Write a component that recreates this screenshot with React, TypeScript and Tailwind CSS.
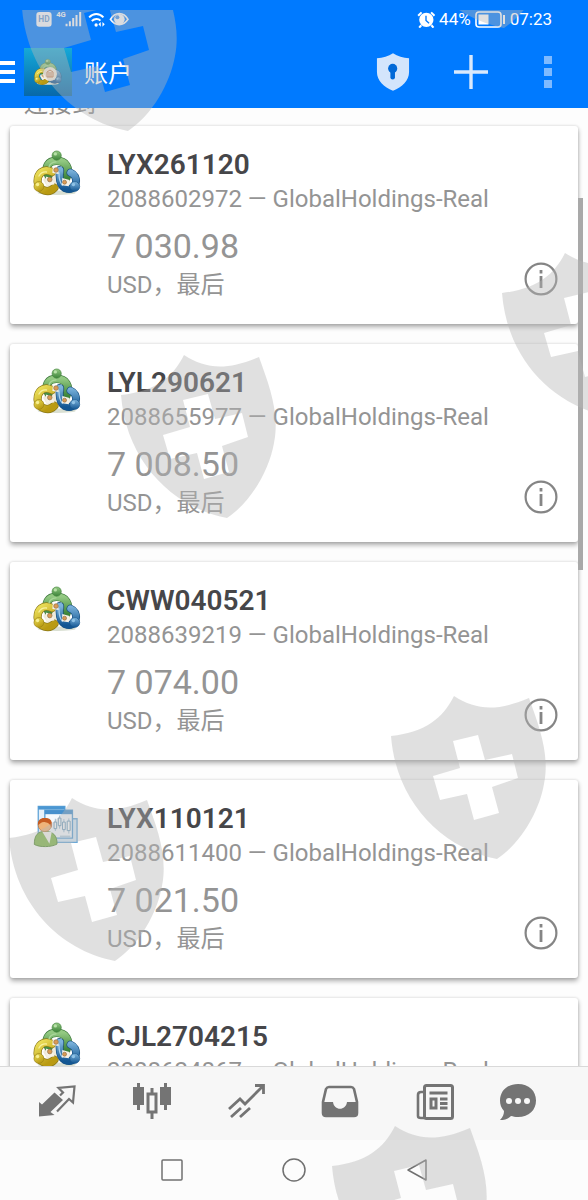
import React from "react";

type Account = {
  name: string;
  login: string;
  balance: string;
  kind: "platform" | "manager";
};

const accounts: Account[] = [
  { name: "LYX261120", login: "2088602972", balance: "7 030.98", kind: "platform" },
  { name: "LYL290621", login: "2088655977", balance: "7 008.50", kind: "platform" },
  { name: "CWW040521", login: "2088639219", balance: "7 074.00", kind: "platform" },
  { name: "LYX110121", login: "2088611400", balance: "7 021.50", kind: "manager" },
  { name: "CJL2704215", login: "2088624867", balance: "7 015.20", kind: "platform" },
];

function PlatformLogo({ className, id }: { className: string; id: string }) {
  return (
    <svg viewBox="25 26 146 142" className={className} aria-hidden="true">
      <defs>
        <linearGradient id={id + "g"} x1="0" y1="0" x2="0" y2="1">
          <stop offset="0" stopColor="#93c982" />
          <stop offset="1" stopColor="#3c8439" />
        </linearGradient>
        <linearGradient id={id + "y"} x1="0" y1="0" x2="0.6" y2="1">
          <stop offset="0" stopColor="#ece05a" />
          <stop offset="1" stopColor="#b99a12" />
        </linearGradient>
        <linearGradient id={id + "b"} x1="0" y1="0" x2="0" y2="1">
          <stop offset="0" stopColor="#7db4dc" />
          <stop offset="1" stopColor="#125693" />
        </linearGradient>
      </defs>
      <ellipse cx="97" cy="157" rx="58" ry="7" fill="#d9dfd2" />
      <path d="M75 84H118L140 128L112 142H70L56 118Z" fill="#efeadb" />
      <g fill="none" strokeLinecap="round">
        <path d="M72 104C59 80 71 60 97 60S140 80 126 112" stroke="#3a7539" strokeWidth="26" />
        <path d="M72 104C59 80 71 60 97 60S140 80 126 112" stroke={`url(#${id}g)`} strokeWidth="22" />
        <path d="M83 94C55 80 38 100 39 124C42 152 74 160 90 142" stroke="#8b7817" strokeWidth="25" />
        <path d="M83 94C55 80 38 100 39 124C42 152 74 160 90 142" stroke={`url(#${id}y)`} strokeWidth="21" />
        <path d="M107 88C104 112 107 134 122 143C148 154 162 128 153 108C149 100 144 98 139 96" stroke="#164e80" strokeWidth="24" />
        <path d="M107 88C104 112 107 134 122 143C148 154 162 128 153 108C149 100 144 98 139 96" stroke={`url(#${id}b)`} strokeWidth="20" />
        <path d="M74 78C76 68 85 64 95 63" stroke="#a9d69a" strokeWidth="4" />
        <path d="M43 106C48 97 57 93 66 94" stroke="#f8f1a0" strokeWidth="4" />
        <path d="M104 96C104 112 107 126 114 134" stroke="#a8d1ee" strokeWidth="4" />
      </g>
      <path d="M64 108L84 114L90 132L66 134ZM114 112L136 118L134 137L113 134ZM85 80L101 81L103 100L84 97Z" fill="#f6f1e6" />
      <g fill="#db9a55" stroke="#8b7044" strokeWidth="2">
        <circle cx="95" cy="88" r="7" />
        <circle cx="76" cy="117" r="7" />
        <circle cx="121" cy="125" r="6" />
      </g>
      <g strokeWidth="2">
        <circle cx="97" cy="44" r="14" fill={`url(#${id}g)`} stroke="#44853f" />
        <circle cx="43" cy="138" r="15" fill={`url(#${id}y)`} stroke="#998015" />
        <circle cx="152" cy="138" r="15" fill={`url(#${id}b)`} stroke="#19558a" />
      </g>
      <circle cx="93" cy="39" r="5" fill="#b8e0a8" />
      <circle cx="39" cy="132" r="5" fill="#f7ef92" />
      <circle cx="148" cy="132" r="5" fill="#8fc2e6" />
    </svg>
  );
}

function ManagerLogo({ className }: { className: string }) {
  return (
    <svg viewBox="102 52 146 142" className={className} aria-hidden="true">
      <path d="M118 60H199V160H118Z" fill="#e6f1fa" stroke="#64a6d8" strokeWidth="4" />
      <path d="M118 60H199V70H118Z" fill="#4b97d2" />
      <path d="M150 98H236V170H150Z" fill="#d6e9f7" stroke="#69a9d9" strokeWidth="4" />
      <path d="M138 72H222V157H138Z" fill="#f4f9fd" stroke="#5b9fd4" strokeWidth="4" />
      <path d="M138 72H222V84H138Z" fill="#4690cd" />
      <path d="M170 98V135M183 88V128M196 99V139M211 97V143M184 151H216" stroke="#719dbd" strokeWidth="2" />
      <path d="M166 108H174V128H166ZM179 96H187V119H179ZM192 108H200V131H192ZM206 105H215V134H206Z" fill="#fff" stroke="#719dbd" strokeWidth="3" />
      <path d="M106 176C106 148 116 137 139 136C163 137 176 149 175 175C157 185 122 185 106 176Z" fill="#83b94d" stroke="#588c35" strokeWidth="3" />
      <path d="M130 137L159 138L152 174Z" fill="#f4f5ee" />
      <ellipse cx="138" cy="117" rx="20" ry="20" fill="#eeb37a" stroke="#bb6f35" strokeWidth="2" />
      <path d="M117 117C115 100 128 94 141 96C158 97 162 108 158 126C154 112 144 109 137 108C127 107 123 114 117 117Z" fill="#c65c22" />
    </svg>
  );
}

function InfoIcon() {
  return (
    <svg viewBox="0 0 34 34" className="size-[34px]" fill="none" aria-hidden="true">
      <circle cx="17" cy="17" r="15.4" stroke="#858585" strokeWidth="2.2" />
      <path d="M17 8V11.5M17 14V26" stroke="#858585" strokeWidth="2.8" />
    </svg>
  );
}

function StatusBar() {
  return (
    <div className="flex h-9 items-center justify-between px-9 pt-[2px] text-white">
      <div className="flex items-center">
        <svg viewBox="105 28 280 54" className="h-[18px] w-[93px]" role="img" aria-label="HD 4G">
          <rect x="106" y="34" width="46" height="44" rx="9" fill="#f4f7fc" />
          <text x="129" y="65" textAnchor="middle" fontSize="25" fontWeight="700" fontFamily="Roboto" fill="#6599d5">HD</text>
          <text x="166" y="50" fontSize="23" fontWeight="700" fontFamily="Roboto" fill="#f4f7fc">4G</text>
          <path d="M197 77V69M207 77V62M217 77V52M227 77V43M238 77V34" stroke="#f4f7fc" strokeWidth="6" />
          <g fill="none" stroke="#fff" strokeWidth="6">
            <path d="M265 50C278 37 295 37 308 50M273 61C282 53 293 53 299 60" />
          </g>
          <circle cx="286" cy="73" r="5" fill="#fff" />
          <path d="M293 71L300 64V78ZM312 71L305 64V78Z" fill="#fff" />
          <path d="M329 56C343 33 369 33 382 56C368 77 343 77 329 56Z" fill="none" stroke="#f4f7fc" strokeWidth="5" />
          <circle cx="356" cy="56" r="16" fill="#f4f7fc" />
          <circle cx="350" cy="50" r="6" fill="#3f90ee" />
        </svg>
      </div>
      <div className="flex items-center gap-1">
        <svg viewBox="203 29 52 50" className="h-[17px] w-[18px]" aria-hidden="true">
          <circle cx="230" cy="55" r="21" fill="#fff" />
          <path d="M206 43L216 33M254 43L244 33M215 71L209 78M245 71L251 78" stroke="#fff" strokeWidth="6" />
          <path d="M229 43V57L238 65" stroke="#007aff" strokeWidth="4" fill="none" />
        </svg>
        <span className="text-[17px] leading-5">44%</span>
        <svg viewBox="0 0 31 17" className="h-[17px] w-[31px]" aria-hidden="true">
          <rect x="1" y="1" width="25" height="15" rx="3" fill="none" stroke="#fff" strokeWidth="1.6" />
          <rect x="3.5" y="3.5" width="10" height="10" fill="#fff" />
          <path d="M29 4V13" stroke="#fff" strokeWidth="2" />
        </svg>
        <time className="text-[17px] leading-5">07:23</time>
      </div>
    </div>
  );
}

function Header() {
  return (
    <header className="relative z-10 h-[108px] shrink-0 bg-[#007aff]">
      <StatusBar />
      <div className="flex h-[72px] items-center">
        <button type="button" aria-label="Menu" className="flex w-6 flex-col gap-[5px]">
          <span className="h-1 w-[15px] bg-white" />
          <span className="h-1 w-[15px] bg-white" />
          <span className="h-1 w-[15px] bg-white" />
        </button>
        <div className="flex size-12 items-center justify-center bg-linear-to-b from-[#16a9d8] to-[#0868a9]">
          <div className="relative">
            <PlatformLogo id="app" className="size-7" />
            <svg viewBox="0 0 16 16" className="absolute left-2 top-2 size-4" aria-hidden="true">
              <circle cx="8" cy="8" r="7" fill="#f3eadb" />
              <path d="M5 6L8 4L11 6V11H5ZM7 6V11M9 6V11" fill="none" stroke="#c78156" />
            </svg>
          </div>
        </div>
        <h1 className="ml-3 pt-1 text-2xl font-normal text-white">账户</h1>
        <div className="ml-auto flex items-center pr-9">
          <button type="button" aria-label="Security">
            <svg viewBox="79 158 100 116" className="h-[38px] w-[34px]" aria-hidden="true">
              <path d="M129 159C143 168 160 174 178 174V217C178 242 157 263 129 273C101 263 80 242 80 217V174C98 174 115 168 129 159Z" fill="#d3e5fc" />
              <circle cx="128" cy="205" r="14" fill="#0069d8" />
              <path d="M128 208V232" stroke="#0069d8" strokeWidth="14" strokeLinecap="round" />
            </svg>
          </button>
          <button type="button" aria-label="Add account" className="ml-11">
            <svg viewBox="0 0 34 34" className="size-[34px]" aria-hidden="true">
              <path d="M17 0V34M0 17H34" stroke="#d9e9fc" strokeWidth="3.4" />
            </svg>
          </button>
          <button type="button" aria-label="More" className="ml-14 flex flex-col gap-1">
            <span className="size-2 bg-[#7fbaff]" />
            <span className="size-2 bg-[#7fbaff]" />
            <span className="size-2 bg-[#7fbaff]" />
          </button>
        </div>
      </div>
    </header>
  );
}

function AccountCard({ account, index }: { account: Account; index: number }) {
  return (
    <li className="flex h-[198px] shrink-0 rounded-[3px] bg-white pl-[23px] pt-[23px] shadow-[0_3px_5px_rgba(0,0,0,0.32),0_0_3px_rgba(0,0,0,0.14)]">
      {account.kind === "platform" ? (
        <PlatformLogo id={"account" + index} className="size-12 shrink-0" />
      ) : (
        <ManagerLogo className="size-12 shrink-0" />
      )}
      <div className="ml-[26px] min-w-0 text-2xl text-[#949494]">
        <h2 className="text-[28px] font-semibold leading-8 text-[#464649]">{account.name}</h2>
        <p className="whitespace-nowrap leading-9">{account.login} — GlobalHoldings-Real</p>
        <p className="mt-2 text-[34px] leading-[42px]">{account.balance}</p>
        <p className="leading-9">USD，最后</p>
      </div>
      <button type="button" aria-label={"Details of " + account.name} className="mb-7 ml-auto mr-5 self-end">
        <InfoIcon />
      </button>
    </li>
  );
}

const tabs: { label: string; icon: React.ReactNode }[] = [
  {
    label: "Quotes",
    icon: (
      <>
        <path d="M5 22.5L17.5 10.5L26 18L13.5 30L17.5 33L2 34.5V20Z" fill="#747474" />
        <path d="M23 13.5L26 10.5L21.5 6L37.5 4.5L36 20.5L32 17L20 29.5" fill="none" stroke="#747474" strokeWidth="2.2" />
      </>
    ),
  },
  {
    label: "Charts",
    icon: (
      <>
        <path d="M6.5 1V28M33.5 1V28M20 6V12M20 30V37" stroke="#747474" strokeWidth="3" />
        <path d="M1 5H12V23H1ZM28 5H39V23H28Z" fill="#747474" />
        <path d="M16 12H24V30H16Z" fill="none" stroke="#747474" strokeWidth="3" />
      </>
    ),
  },
  {
    label: "Trade",
    icon: (
      <path d="M3 27L14 17L19 22L36 5M29 3.5H37.5V12M5 35L15 26M14 35L24 26" fill="none" stroke="#747474" strokeWidth="2.8" />
    ),
  },
  {
    label: "Mailbox",
    icon: (
      <>
        <path d="M9 5H31Q33 5 34 7L37 20V31Q37 34 34 34H6Q3 34 3 31V20L6 7Q7 5 9 5Z" fill="none" stroke="#747474" strokeWidth="2.6" />
        <path d="M3 20H13C14 29 26 29 27 20H37V34H3Z" fill="#747474" />
      </>
    ),
  },
  {
    label: "News",
    icon: (
      <>
        <path d="M9 10H6Q3 10 3 13V34Q3 36 6 36H9" fill="none" stroke="#747474" strokeWidth="2.6" />
        <rect x="9.5" y="3.5" width="28" height="33" rx="2" fill="none" stroke="#747474" strokeWidth="3" />
        <path d="M14.5 11H32.5M25 17H32.5M25 21.5H32.5M25 26H32.5" stroke="#747474" strokeWidth="2.8" />
        <rect x="16" y="17" width="5" height="9" fill="none" stroke="#747474" strokeWidth="3" />
      </>
    ),
  },
  {
    label: "Chat",
    icon: (
      <>
        <path d="M20 2C31 2 38 9 38 18.5S31 35 20 35C17 35 15 34.5 13 34C10 37 6 38 2 38C5 35 6 32 6 29C3 26 2 22 2 18.5C2 9 9 2 20 2Z" fill="#747474" />
        <circle cx="11" cy="19" r="3" fill="#f8f8f8" />
        <circle cx="20" cy="19" r="3" fill="#f8f8f8" />
        <circle cx="29" cy="19" r="3" fill="#f8f8f8" />
      </>
    ),
  },
];

function BottomBars() {
  return (
    <footer className="shrink-0">
      <nav className="grid h-[74px] grid-cols-[94fr_94fr_94fr_94fr_94fr_72fr] border-t border-[#d9d9d9] bg-[#f7f7f7] pb-1 pl-[10px] pr-[34px]">
        {tabs.map((tab) => (
          <button key={tab.label} type="button" aria-label={tab.label} className="flex items-center justify-center">
            <svg viewBox="0 0 40 40" className="size-10" aria-hidden="true">
              {tab.icon}
            </svg>
          </button>
        ))}
      </nav>
      <nav className="h-[60px] bg-[#fcfcfc]">
        <div className="mx-auto grid h-full w-5/8 grid-cols-3">
          <button type="button" aria-label="Recent apps" className="flex items-center justify-center">
            <svg viewBox="0 0 26 26" className="size-[26px]" fill="none" stroke="#707070" strokeWidth="1.5" aria-hidden="true">
              <rect x="3" y="3" width="20" height="20" rx="1" />
            </svg>
          </button>
          <button type="button" aria-label="Home" className="flex items-center justify-center">
            <svg viewBox="0 0 26 26" className="size-[26px]" fill="none" stroke="#707070" strokeWidth="1.5" aria-hidden="true">
              <circle cx="13" cy="13" r="11" />
            </svg>
          </button>
          <button type="button" aria-label="Back" className="flex items-center justify-center">
            <svg viewBox="0 0 26 26" className="size-[26px]" fill="none" stroke="#707070" strokeWidth="1.5" strokeLinejoin="round" aria-hidden="true">
              <path d="M4 13L22 3V23Z" />
            </svg>
          </button>
        </div>
      </nav>
    </footer>
  );
}

const shields: [number, number][] = [
  [22, -42],
  [398, -145],
  [121, 345],
  [502, 243],
  [391, 686],
  [9, 788],
  [332, 1116],
];

function ShieldMarks() {
  return (
    <div className="pointer-events-none absolute inset-x-0 bottom-0 top-[10px] z-20 overflow-hidden" aria-hidden="true">
      {shields.map(([left, top]) => (
        <svg key={left} viewBox="0 0 157 165" className="absolute h-[165px] w-[157px]" style={{ left, top }}>
          <path
            fillRule="evenodd"
            fill="#b5b5b5"
            fillOpacity="0.42"
            d="M0 40C35 36 52 22 63 0C85 14 105 16 138 2C148 30 159 58 153 88C148 116 130 147 106 163C50 152 5 105 0 40ZM62 45L87 39L94 64L121 58L127 82L101 91L108 117L83 124L76 98L49 104L42 80L69 72Z"
          />
        </svg>
      ))}
    </div>
  );
}

export default function App() {
  return (
    <div className="relative flex h-screen flex-col overflow-hidden bg-[#fdfdfd] font-[Roboto,'Noto_Sans_CJK_SC',sans-serif]">
      <Header />
      <main className="relative min-h-0 flex-1 overflow-hidden">
        <p className="-mt-5 h-[38px] pl-6 text-2xl leading-8 text-[#8e8e8e]">连接到</p>
        <ul className="flex flex-col gap-5 px-[10px]">
          {accounts.map((account, index) => (
            <AccountCard key={account.name} account={account} index={index} />
          ))}
        </ul>
        <div className="absolute right-[5px] top-[90px] h-[372px] w-[5px] bg-[#a9a9a9]" />
      </main>
      <BottomBars />
      <ShieldMarks />
    </div>
  );
}
